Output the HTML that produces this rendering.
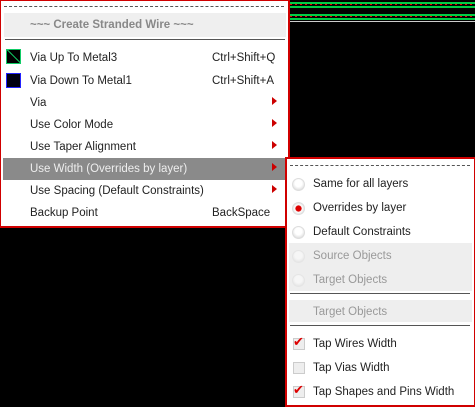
<!DOCTYPE html><html><head><style>
body{margin:0;width:475px;height:406px;background:#000;position:relative;overflow:hidden;font-family:"Liberation Sans","DejaVu Sans",sans-serif;font-size:11.5px;color:#222}
.a{position:absolute}
.m{left:0;top:0;width:287px;height:225px;background:#fff;border:1px solid #d00000;border-width:1px 2px 2px 1px}
.t{position:absolute;left:29px;white-space:nowrap}
.m .t{margin-top:1px}
.k{position:absolute;left:211px;margin-top:1px}
.ar{position:absolute;left:271px;width:0;height:0;border-left:5px solid #c00;border-top:4px solid transparent;border-bottom:4px solid transparent;margin-top:-2px}
.dash{position:absolute;height:0;border-top:1px dashed #555}
.s{left:285px;top:157px;width:187px;height:246px;background:#fff;border:2px solid #d00000}
.r{position:absolute;width:11px;height:11px;border-radius:50%;background:radial-gradient(circle at 50% 40%,#fff 40%,#ccc 100%);border:1px solid #ddd}
.cb{position:absolute;width:10px;height:10px;background:#eee;border:1px solid #ccc}
</style></head><body>
<div class="a" style="left:290px;top:2px;width:185px;height:2px;background:#0c4"></div>
<div class="a" style="left:290px;top:4px;width:185px;height:1px;background:repeating-linear-gradient(90deg,#e00 0 2px,transparent 2px 5px)"></div>
<div class="a" style="left:290px;top:6px;width:185px;height:2px;background:#0c4"></div>
<div class="a" style="left:290px;top:14px;width:185px;height:2px;background:#0c4"></div>
<div class="a" style="left:290px;top:16px;width:185px;height:1px;background:repeating-linear-gradient(90deg,#e00 0 2px,transparent 2px 5px)"></div>
<div class="a" style="left:290px;top:18px;width:185px;height:2px;background:#0c4"></div>
<div class="a" style="left:290px;top:21px;width:185px;height:1px;background:#ccc"></div>
<div class="a m">
<div class="dash" style="left:3px;top:5px;width:280px"></div>
<div class="a" style="left:3px;top:12px;width:282px;height:24px;background:#efefef"></div>
<div class="t" style="top:17px;color:#888;font-weight:bold">~~~ Create Stranded Wire ~~~</div>
<div class="a" style="left:4px;top:38px;width:280px;height:1px;background:#555"></div>
<div class="a" style="left:5px;top:48px;width:13px;height:13px;background:#000;border:1px solid #1c6;overflow:hidden"><div style="position:absolute;left:-3px;top:6px;width:20px;height:1px;background:#1c6;transform:rotate(45deg)"></div></div>
<div class="t" style="top:50px">Via Up To Metal3</div><div class="k" style="top:50px">Ctrl+Shift+Q</div>
<div class="a" style="left:5px;top:72px;width:13px;height:13px;background:#001;border:1px solid #22f"></div>
<div class="t" style="top:73px">Via Down To Metal1</div><div class="k" style="top:73px">Ctrl+Shift+A</div>
<div class="t" style="top:95px">Via</div><div class="ar" style="top:98px"></div>
<div class="t" style="top:117px">Use Color Mode</div><div class="ar" style="top:120px"></div>
<div class="t" style="top:139px">Use Taper Alignment</div><div class="ar" style="top:142px"></div>
<div class="a" style="left:2px;top:157px;width:283px;height:22px;background:#8a8a8a"></div>
<div class="t" style="top:161px;color:#eee">Use Width (Overrides by layer)</div><div class="ar" style="top:164px"></div>
<div class="t" style="top:183px">Use Spacing (Default Constraints)</div><div class="ar" style="top:186px"></div>
<div class="t" style="top:205px">Backup Point</div><div class="k" style="top:205px">BackSpace</div>
</div>
<div class="a s">
<div class="dash" style="left:3px;top:6px;width:180px"></div>
<div class="a" style="left:2px;top:84px;width:183px;height:48px;background:#eee"></div>
<div class="a" style="left:2px;top:141px;width:183px;height:22px;background:#eee"></div>
<div class="a" style="left:3px;top:134px;width:180px;height:1px;background:#555"></div>
<div class="a" style="left:3px;top:166px;width:180px;height:1px;background:#555"></div>
<div class="r" style="left:5px;top:19px"></div><div class="t" style="left:26px;top:19px">Same for all layers</div>
<div class="r" style="left:5px;top:43px;background:radial-gradient(circle,#d00 35%,#fff 45%,#ccc 100%)"></div><div class="t" style="left:26px;top:43px">Overrides by layer</div>
<div class="r" style="left:5px;top:67px"></div><div class="t" style="left:26px;top:67px">Default Constraints</div>
<div class="r" style="left:5px;top:91px;opacity:.5"></div><div class="t" style="left:26px;top:91px;color:#999">Source Objects</div>
<div class="r" style="left:5px;top:115px;opacity:.5"></div><div class="t" style="left:26px;top:115px;color:#999">Target Objects</div>
<div class="t" style="left:26px;top:147px;color:#999">Target Objects</div>
<div class="cb" style="left:6px;top:179px"></div><div class="a" style="left:6px;top:175px;color:#d00;font-size:13px;font-weight:bold">✔</div><div class="t" style="left:26px;top:179px">Tap Wires Width</div>
<div class="cb" style="left:6px;top:203px"></div><div class="t" style="left:26px;top:203px">Tap Vias Width</div>
<div class="cb" style="left:6px;top:227px"></div><div class="a" style="left:6px;top:223px;color:#d00;font-size:13px;font-weight:bold">✔</div><div class="t" style="left:26px;top:227px">Tap Shapes and Pins Width</div>
</div>
</body></html>
